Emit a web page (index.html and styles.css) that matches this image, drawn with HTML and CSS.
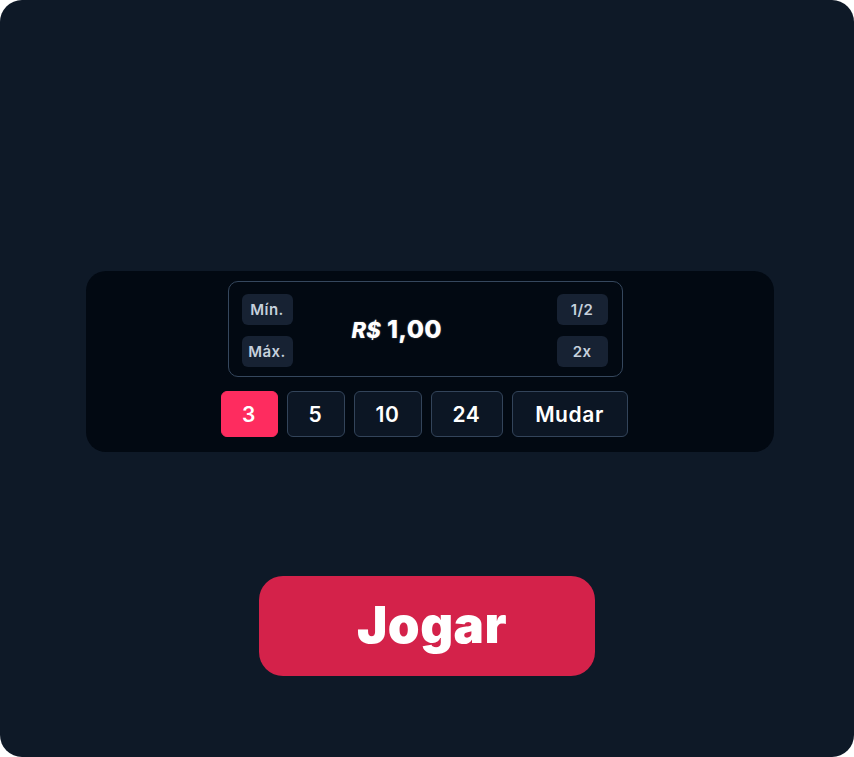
FILE: index.html
```html
<!DOCTYPE html>
<html lang="pt-BR">
<head>
<meta charset="utf-8">
<title>Jogar</title>
<link rel="stylesheet" href="styles.css">
</head>
<body>
<div class="card">
  <div class="panel">
    <div class="bet-box">
      <div class="side">
        <button class="mini">Mín.</button>
        <button class="mini">Máx.</button>
      </div>
      <div class="amount"><span class="cur">R$</span> 1,00</div>
      <div class="side">
        <button class="mini">1/2</button>
        <button class="mini">2x</button>
      </div>
    </div>
    <div class="chips">
      <button class="chip chip-active w57">3</button>
      <button class="chip w58">5</button>
      <button class="chip w68">10</button>
      <button class="chip w72">24</button>
      <button class="chip w116">Mudar</button>
    </div>
  </div>
  <button class="play">Jogar</button>
</div>
</body>
</html>
```
FILE: styles.css
```css
* { box-sizing: border-box; }
html, body { margin: 0; padding: 0; background: #ffffff; }
body { font-family: Inter, "Open Sans", "Liberation Sans", sans-serif; }

.card {
  width: 854px;
  height: 757px;
  background: #0e1927;
  border-radius: 22px;
  display: flex;
  flex-direction: column;
  align-items: flex-start;
}

.panel {
  margin: 271px 0 0 86px;
  width: 688px;
  height: 181px;
  background: #020912;
  border-radius: 20px;
  padding: 10px 10px 0 0;
  display: flex;
  flex-direction: column;
  align-items: center;
  gap: 14px;
}

.bet-box {
  width: 395px;
  height: 96px;
  border: 1.5px solid #35475d;
  border-radius: 10px;
  padding: 12px 14px 0 13px;
  display: flex;
  align-items: flex-start;
}

.side {
  display: flex;
  flex-direction: column;
  gap: 11px;
}

.mini {
  width: 51px;
  height: 31px;
  border: none;
  border-radius: 6px;
  background: #172233;
  color: #c5d0dc;
  font-family: inherit;
  font-size: 15px;
  font-weight: 600;
  letter-spacing: 0.4px;
  padding: 0;
}

.amount {
  flex: 1;
  margin: 20px 0 0 59px;
  color: #ffffff;
  font-size: 25px;
  font-weight: 800;
  letter-spacing: 0.3px;
  text-shadow: 0 0 2px rgba(255,255,255,0.35);
}
.cur { font-style: italic; font-size: 22px; }

.chips {
  display: flex;
  gap: 9px;
  margin-right: 2px;
}

.chip {
  height: 46px;
  border: 1px solid #33445a;
  border-radius: 6px;
  background: #0c1624;
  color: #ffffff;
  font-family: inherit;
  font-size: 21px;
  font-weight: 600;
  letter-spacing: 0.6px;
  padding: 0;
}
.chip-active { background: #fe2c5f; border-color: #fe2c5f; }
.w57 { width: 57px; }
.w58 { width: 58px; }
.w68 { width: 68px; }
.w72 { width: 72px; }
.w116 { width: 116px; }

.play {
  margin: 124px 0 0 259px;
  width: 336px;
  height: 100px;
  border: none;
  border-radius: 24px;
  background: #d4224a;
  color: #ffffff;
  font-family: Inter, "Open Sans", sans-serif;
  font-size: 51px;
  font-weight: 900;
  letter-spacing: 0.4px;
  padding: 0 0 4px 10px;
}
```
